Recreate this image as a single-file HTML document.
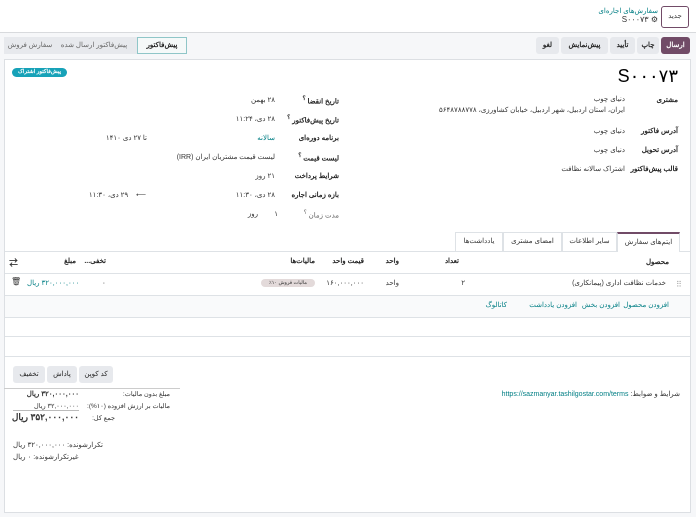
<!DOCTYPE html>
<html><head><meta charset="utf-8"><style>
*{margin:0;padding:0;box-sizing:border-box}
body{width:696px;height:517px;background:#f6f7f9;font-family:"Liberation Sans","Noto Sans CJK SC",sans-serif;font-size:7px;color:#333;position:relative;overflow:hidden;direction:rtl}
.a{position:absolute;white-space:nowrap}
.r{position:absolute;white-space:nowrap;text-align:right}
.btn{position:absolute;background:#e7e9ed;border-radius:3px;text-align:center;font-weight:bold;color:#222;line-height:17px;font-size:7px}
.lbl{font-weight:bold;color:#222}
.teal{color:#017e84}
.hl{position:absolute;height:1px;background:#dee2e6}
</style></head><body>
<div class="a" style="left:0;top:0;width:696px;height:33px;background:#fff;border-bottom:1px solid #d8dadd"></div>
<div class="a" style="left:661px;top:6px;width:28px;height:22px;border:1px solid #714b67;border-radius:3px;background:#fff;text-align:center;line-height:20px">جدید</div>
<div class="r teal" style="right:38px;top:7px">سفارش‌های اجاره‌ای</div>
<div class="r" style="right:38px;top:15px;font-size:8px">⚙ S۰۰۰۷۳</div>

<div class="btn" style="left:661px;top:37px;width:29px;background:#714b67;color:#fff">ارسال</div>
<div class="btn" style="left:637px;top:37px;width:22px">چاپ</div>
<div class="btn" style="left:610px;top:37px;width:25px">تأیید</div>
<div class="btn" style="left:561px;top:37px;width:47px">پیش‌نمایش</div>
<div class="btn" style="left:536px;top:37px;width:23px">لغو</div>

<div class="a" style="left:4px;top:37px;width:183px;height:17px;background:#e7e9ed"></div>
<div class="a" style="left:137px;top:37px;width:50px;height:17px;background:#f5f9f9;border:1px solid #8fc6c8;text-align:center;line-height:15px;font-weight:bold;color:#222">پیش‌فاکتور</div>
<div class="a" style="left:54px;top:37px;width:80px;line-height:17px;text-align:center;color:#666">پیش‌فاکتور ارسال شده</div>
<div class="a" style="left:6px;top:37px;width:48px;line-height:17px;text-align:center;color:#666">سفارش فروش</div>

<div class="a" style="left:4px;top:59px;width:687px;height:454px;background:#fff;border:1px solid #dcdfe3"></div>

<div class="r" style="right:18px;top:66px;font-size:18px;color:#000">S۰۰۰۷۳</div>
<div class="a" style="left:12px;top:68px;width:55px;height:9px;border-radius:5px;background:#17a2b8;color:#fff;font-size:5.5px;line-height:9px;text-align:center;font-weight:bold">پیش‌فاکتور اشتراک</div>

<div class="r lbl" style="right:18px;top:96px">مشتری</div>
<div class="r" style="right:71px;top:95px">دنیای چوب</div>
<div class="r" style="right:71px;top:106px">ایران، استان اردبیل، شهر اردبیل، خیابان کشاورزی، ۵۶۴۸۷۸۸۷۷۸</div>
<div class="r lbl" style="right:18px;top:127px">آدرس فاکتور</div>
<div class="r" style="right:71px;top:127px">دنیای چوب</div>
<div class="r lbl" style="right:18px;top:146px">آدرس تحویل</div>
<div class="r" style="right:71px;top:146px">دنیای چوب</div>
<div class="r lbl" style="right:18px;top:165px">قالب پیش‌فاکتور</div>
<div class="r" style="right:71px;top:165px">اشتراک سالانه نظافت</div>

<div class="r lbl" style="right:357px;top:96px">تاریخ انقضا <sup>؟</sup></div>
<div class="r" style="right:421px;top:96px">۲۸ بهمن</div>
<div class="r lbl" style="right:357px;top:115px">تاریخ پیش‌فاکتور <sup>؟</sup></div>
<div class="r" style="right:421px;top:115px">۲۸ دی، ۱۱:۲۴</div>
<div class="r lbl" style="right:357px;top:134px">برنامه دوره‌ای</div>
<div class="r teal" style="right:421px;top:134px">سالانه</div>
<div class="r" style="right:549px;top:134px">تا ۲۷ دی ۱۴۱۰</div>
<div class="r lbl" style="right:357px;top:153px">لیست قیمت <sup>؟</sup></div>
<div class="r" style="right:421px;top:153px">لیست قیمت مشتریان ایران (IRR)</div>
<div class="r lbl" style="right:357px;top:172px">شرایط پرداخت</div>
<div class="r" style="right:421px;top:172px">۲۱ روز</div>
<div class="r lbl" style="right:357px;top:191px">بازه زمانی اجاره</div>
<div class="r" style="right:421px;top:191px">۲۸ دی، ۱۱:۳۰</div>
<div class="r" style="right:550px;top:191px">⟵ &nbsp;&nbsp; ۲۹ دی، ۱۱:۳۰</div>
<div class="r" style="right:357px;top:210px;color:#666">مدت زمان <sup>؟</sup></div>
<div class="r" style="right:418px;top:210px">۱</div>
<div class="r" style="right:438px;top:210px">روز</div>

<div class="hl" style="left:5px;top:251px;width:685px"></div>
<div class="a" style="left:617px;top:232px;width:63px;height:20px;background:#fff;border:1px solid #dee2e6;border-top:2px solid #714b67;border-bottom:none;text-align:center;line-height:18px">ایتم‌های سفارش</div>
<div class="a" style="left:562px;top:232px;width:55px;height:19px;border:1px solid #dee2e6;border-bottom:none;text-align:center;line-height:18px">سایر اطلاعات</div>
<div class="a" style="left:503px;top:232px;width:59px;height:19px;border:1px solid #dee2e6;border-bottom:none;text-align:center;line-height:18px">امضای مشتری</div>
<div class="a" style="left:455px;top:232px;width:48px;height:19px;border:1px solid #dee2e6;border-bottom:none;text-align:center;line-height:18px">یادداشت‌ها</div>

<div class="r lbl" style="right:27px;top:258px">محصول</div>
<div class="r lbl" style="right:237px;top:257px">تعداد</div>
<div class="r lbl" style="right:297px;top:257px">واحد</div>
<div class="r lbl" style="right:332px;top:257px">قیمت واحد</div>
<div class="r lbl" style="right:381px;top:257px">مالیات‌ها</div>
<div class="r lbl" style="right:590px;top:257px">تخفی...</div>
<div class="r lbl" style="right:620px;top:257px">مبلغ</div>
<div class="a" style="left:9px;top:256px;font-size:9px;font-weight:bold">⇄</div>
<div class="hl" style="left:5px;top:273px;width:685px"></div>
<div class="a" style="left:676px;top:280px;color:#aaa;font-size:8px">⠿</div>
<div class="r" style="right:30px;top:279px">خدمات نظافت اداری (پیمانکاری)</div>
<div class="r" style="right:231px;top:279px">۲</div>
<div class="r" style="right:297px;top:279px">واحد</div>
<div class="r" style="right:332px;top:279px">۱۶۰,۰۰۰,۰۰۰</div>
<div class="a" style="left:261px;top:279px;width:54px;height:8px;border-radius:4px;background:#e3dada;font-size:5px;line-height:8px;text-align:center">مالیات فروش ۱۰٪</div>
<div class="a" style="left:102px;top:279px">۰</div>
<div class="a teal" style="left:27px;top:279px">۳۲۰,۰۰۰,۰۰۰ ریال</div>
<div class="a" style="left:11px;top:277px;font-size:8px">🗑</div>
<div class="hl" style="left:5px;top:295px;width:685px"></div>
<div class="a" style="left:5px;top:296px;width:685px;height:21px;background:#f9fafb"></div>
<div class="r teal" style="right:27px;top:301px">افزودن محصول</div>
<div class="r teal" style="right:76px;top:301px">افزودن بخش</div>
<div class="r teal" style="right:119px;top:301px">افزودن یادداشت</div>
<div class="r teal" style="right:189px;top:301px">کاتالوگ</div>
<div class="hl" style="left:5px;top:317px;width:685px"></div>
<div class="hl" style="left:5px;top:336px;width:685px"></div>
<div class="hl" style="left:5px;top:356px;width:685px"></div>

<div class="btn" style="left:79px;top:366px;width:34px;font-weight:normal">کد کوپن</div>
<div class="btn" style="left:47px;top:366px;width:30px;font-weight:normal">پاداش</div>
<div class="btn" style="left:13px;top:366px;width:32px;font-weight:normal">تخفیف</div>
<div class="hl" style="left:4px;top:388px;width:176px;background:#ccc"></div>
<div class="r" style="right:526px;top:390px;font-size:6.5px">مبلغ بدون مالیات:</div>
<div class="r" style="right:617px;top:390px;font-weight:bold">۳۲۰,۰۰۰,۰۰۰ ریال</div>
<div class="r" style="right:526px;top:402px;font-size:6.5px">مالیات بر ارزش افزوده (۱۰%):</div>
<div class="r" style="right:617px;top:402px;font-size:6.5px">۳۲,۰۰۰,۰۰۰ ریال</div>
<div class="hl" style="left:13px;top:410px;width:66px;background:#bbb"></div>
<div class="r" style="right:581px;top:414px;font-size:6.5px">جمع کل:</div>
<div class="r" style="right:617px;top:412px;font-weight:bold;font-size:9px">۳۵۲,۰۰۰,۰۰۰ ریال</div>
<div class="a" style="left:13px;top:441px">تکرارشونده: ۳۲۰,۰۰۰,۰۰۰ ریال</div>
<div class="a" style="left:13px;top:453px">غیرتکرارشونده: ۰ ریال</div>

<div class="r" style="right:16px;top:390px">شرایط و ضوابط: <span class="teal" style="direction:ltr;unicode-bidi:embed">https://sazmanyar.tashilgostar.com/terms</span></div>
</body></html>
